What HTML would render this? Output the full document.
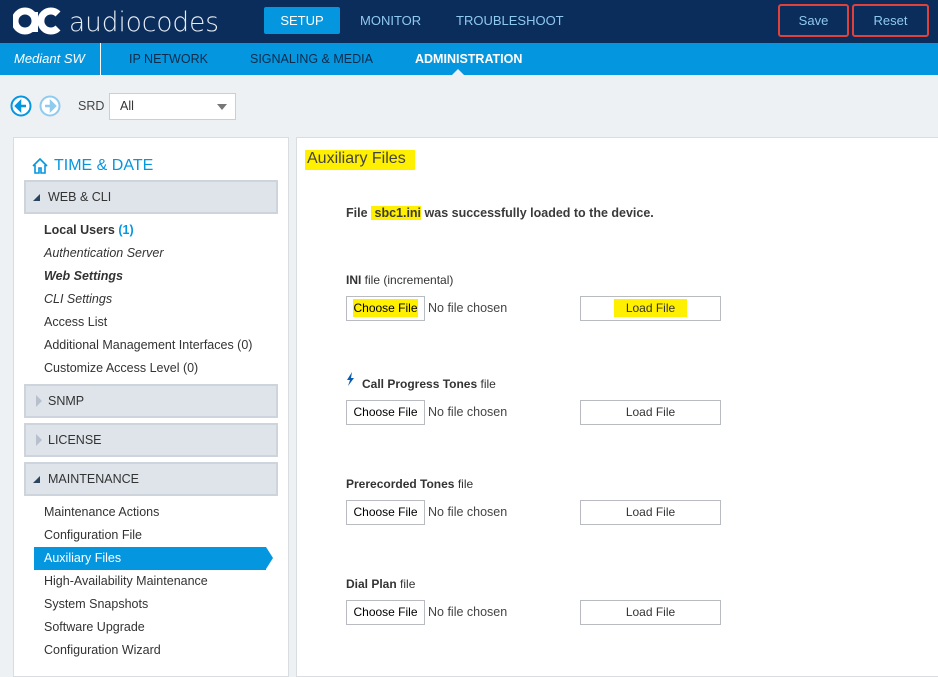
<!DOCTYPE html>
<html><head><meta charset="utf-8"><style>
*{margin:0;padding:0;box-sizing:border-box}
body{width:938px;height:668px;overflow:hidden;background:#eef1f4;font-family:"Liberation Sans","DejaVu Sans",sans-serif;position:relative;color:#333}
.a{position:absolute;white-space:nowrap}
#top{left:0;top:0;width:938px;height:43px;background:#0b2d5b}
#nav{left:0;top:43px;width:938px;height:32px;background:#0596e0}
.tn{color:#8fc8f0;font-size:13px;top:13px}
.sn{color:#0d2b4a;font-size:12.5px;top:52px}
.btn{border:2px solid #e0413b;border-radius:3px;color:#8fc8f0;font-size:13px;display:flex;align-items:center;justify-content:center;height:33px;top:4px}
.panel{background:#fff;border:1px solid #d9dde2}
.grp{left:24px;width:254px;background:#dee4ea;border:2px solid #cdd4db;font-size:12.5px;color:#333;padding-left:22px;line-height:30px;height:34px}
.it{left:44px;font-size:12.5px;color:#333}
.lbl{left:346px;font-size:12px;color:#333}
.cf{left:346px;width:79px;height:25px;border:1px solid #b8bcc0;background:#fff;font-size:12px;color:#000;text-align:center;line-height:23px}
.nf{left:428px;font-size:12.5px;color:#444}
.lf{left:580px;width:141px;height:25px;border:1px solid #b8bcc0;background:#fff;font-size:12px;color:#333;text-align:center;line-height:23px}
.hl{background:#ffef00}
</style></head><body>
<div id="top" class="a"></div>
<svg class="a" style="left:13px;top:6px" width="210" height="32" viewBox="0 0 210 32">
<circle cx="12" cy="15" r="10" fill="none" stroke="#fff" stroke-width="7"/>
<rect x="19" y="6" width="6" height="20" fill="#fff"/>
<path d="M45 8 A10 10 0 1 0 45 22" fill="none" stroke="#fff" stroke-width="7"/>
<text x="56" y="25" fill="#e8eef5" font-family="DejaVu Sans" font-weight="200" font-size="27" textLength="150" lengthAdjust="spacingAndGlyphs">audiocodes</text>
</svg>
<div class="a" style="left:264px;top:7px;width:76px;height:27px;background:#0596e0;border-radius:2px;color:#fff;font-size:13px;text-align:center;line-height:27px">SETUP</div>
<div class="a tn" style="left:360px">MONITOR</div>
<div class="a tn" style="left:456px">TROUBLESHOOT</div>
<div class="a btn" style="left:778px;width:71px">Save</div>
<div class="a btn" style="left:852px;width:77px">Reset</div>
<div id="nav" class="a"></div>
<div class="a" style="left:14px;top:51px;color:#fff;font-size:13px;font-style:italic">Mediant SW</div>
<div class="a" style="left:100px;top:43px;width:1px;height:32px;background:#fff"></div>
<div class="a sn" style="left:129px">IP NETWORK</div>
<div class="a sn" style="left:250px">SIGNALING &amp; MEDIA</div>
<div class="a sn" style="left:415px;color:#fff;font-weight:bold">ADMINISTRATION</div>
<div class="a" style="left:452px;top:69px;width:0;height:0;border-left:6px solid transparent;border-right:6px solid transparent;border-bottom:6px solid #eef1f4"></div>
<svg class="a" style="left:10px;top:95px" width="52" height="24"><circle cx="11" cy="11" r="9.5" fill="#fff" stroke="#0596e0" stroke-width="2"/><path d="M6 11h10M6 11l4-4v8z" stroke="#0596e0" stroke-width="2.5" fill="#0596e0"/><circle cx="40" cy="11" r="9.5" fill="#fff" stroke="#8fcbef" stroke-width="2"/><path d="M35 11h10M45 11l-4-4v8z" stroke="#8fcbef" stroke-width="2.5" fill="#8fcbef"/></svg>
<div class="a" style="left:78px;top:99px;font-size:12.5px;color:#444">SRD</div>
<div class="a" style="left:109px;top:93px;width:127px;height:27px;background:#fff;border:1px solid #ccd;font-size:12.5px;color:#333;line-height:25px;padding-left:10px">All<span style="position:absolute;right:8px;top:10px;border-left:5px solid transparent;border-right:5px solid transparent;border-top:6px solid #777"></span></div>
<div class="a panel" style="left:13px;top:137px;width:276px;height:540px"></div>
<div class="a panel" style="left:296px;top:137px;width:650px;height:540px"></div>
<svg class="a" style="left:31px;top:157px" width="18" height="18"><path d="M2 9L9 2l7 7M4 8v8h4v-5h2v5h4V8" fill="none" stroke="#0596e0" stroke-width="1.6"/></svg>
<div class="a" style="left:54px;top:157px;font-size:16px;color:#0596e0">TIME &amp; DATE</div>
<div class="a grp" style="top:180px">WEB &amp; CLI</div>
<div class="a" style="left:33px;top:194px;border-left:7px solid transparent;border-bottom:7px solid #2b4560"></div>
<div class="a it" style="top:223px;font-weight:bold">Local Users <span style="color:#0596e0">(1)</span></div>
<div class="a it" style="top:246px;font-style:italic">Authentication Server</div>
<div class="a it" style="top:269px;font-style:italic;font-weight:bold">Web Settings</div>
<div class="a it" style="top:292px;font-style:italic">CLI Settings</div>
<div class="a it" style="top:315px">Access List</div>
<div class="a it" style="top:338px">Additional Management Interfaces (0)</div>
<div class="a it" style="top:361px">Customize Access Level (0)</div>
<div class="a grp" style="top:384px">SNMP</div>
<div class="a" style="left:36px;top:395px;border-top:6px solid transparent;border-bottom:6px solid transparent;border-left:6px solid #b7c0cc"></div>
<div class="a grp" style="top:423px">LICENSE</div>
<div class="a" style="left:36px;top:434px;border-top:6px solid transparent;border-bottom:6px solid transparent;border-left:6px solid #b7c0cc"></div>
<div class="a grp" style="top:462px">MAINTENANCE</div>
<div class="a" style="left:33px;top:476px;border-left:7px solid transparent;border-bottom:7px solid #2b4560"></div>
<div class="a it" style="top:505px">Maintenance Actions</div>
<div class="a it" style="top:528px">Configuration File</div>
<div class="a" style="left:34px;top:547px;width:232px;height:23px;background:#0596e0"></div>
<div class="a" style="left:266px;top:547px;border-top:11.5px solid transparent;border-bottom:11.5px solid transparent;border-left:7px solid #0596e0"></div>
<div class="a it" style="top:551px;color:#fff">Auxiliary Files</div>
<div class="a it" style="top:574px">High-Availability Maintenance</div>
<div class="a it" style="top:597px">System Snapshots</div>
<div class="a it" style="top:620px">Software Upgrade</div>
<div class="a it" style="top:643px">Configuration Wizard</div>
<div class="a hl" style="left:305px;top:150px;width:110px;height:20px"></div>
<div class="a" style="left:307px;top:150px;font-size:16px;color:#444">Auxiliary Files</div>
<div class="a" style="left:346px;top:206px;font-size:12.5px;color:#3a3a3a;font-weight:bold">File <span class="hl">&nbsp;sbc1.ini</span> was successfully loaded to the device.</div>
<div class="a lbl" style="top:273px"><b>INI</b> file (incremental)</div>
<div class="a cf" style="top:296px"><span class="hl" style="padding:2px 0">Choose File</span></div>
<div class="a nf" style="top:301px">No file chosen</div>
<div class="a lf" style="top:296px"><span class="hl" style="padding:2px 12px">Load File</span></div>
<svg class="a" style="left:346px;top:372px" width="10" height="14"><path d="M6 0L1 8h3l-2 6 6-8H5z" fill="#0b5cb0"/></svg>
<div class="a lbl" style="left:362px;top:377px"><b>Call Progress Tones</b> file</div>
<div class="a cf" style="top:400px">Choose File</div>
<div class="a nf" style="top:405px">No file chosen</div>
<div class="a lf" style="top:400px">Load File</div>
<div class="a lbl" style="top:477px"><b>Prerecorded Tones</b> file</div>
<div class="a cf" style="top:500px">Choose File</div>
<div class="a nf" style="top:505px">No file chosen</div>
<div class="a lf" style="top:500px">Load File</div>
<div class="a lbl" style="top:577px"><b>Dial Plan</b> file</div>
<div class="a cf" style="top:600px">Choose File</div>
<div class="a nf" style="top:605px">No file chosen</div>
<div class="a lf" style="top:600px">Load File</div>
</body></html>
